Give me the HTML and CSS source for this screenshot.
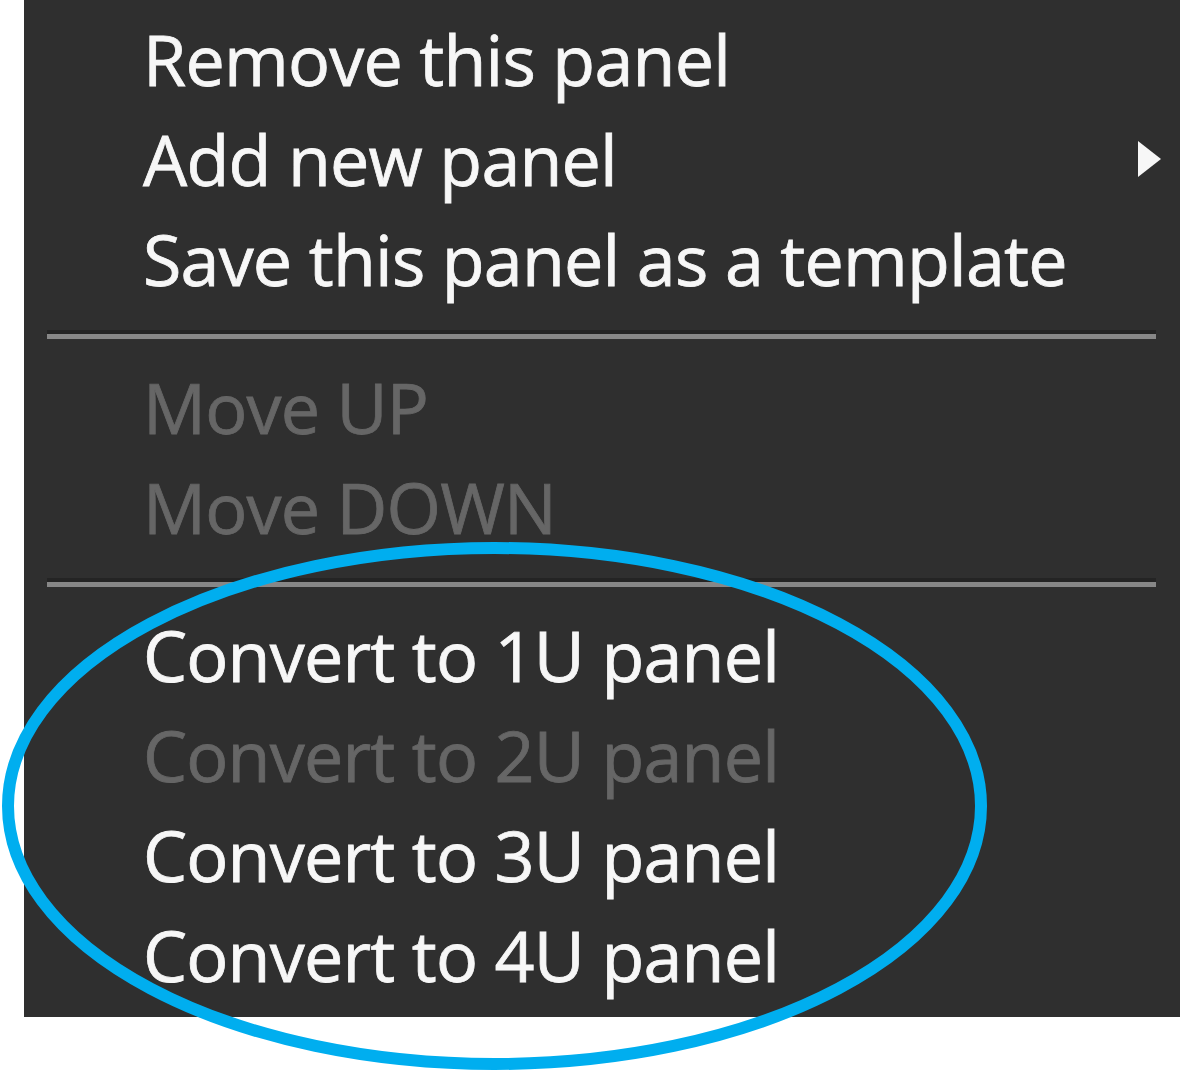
FILE: index.html
```html
<!DOCTYPE html>
<html lang="en">
<head>
  <meta charset="UTF-8" />
  <title>Panel menu</title>
  <link rel="stylesheet" href="styles.css">
</head>
<body>
  <div class="menu">
    <div class="menu-item">Remove this panel</div>
    <div class="menu-item">Add new panel <span class="submenu-arrow"></span></div>
    <div class="menu-item">Save this panel as a template</div>

    <div class="separator"></div>

    <div class="menu-item disabled">Move UP</div>
    <div class="menu-item disabled">Move DOWN</div>

    <div class="separator"></div>

    <div class="menu-item">Convert to 1U panel</div>
    <div class="menu-item disabled">Convert to 2U panel</div>
    <div class="menu-item">Convert to 3U panel</div>
    <div class="menu-item">Convert to 4U panel</div>
  </div>

  <!-- highlight drawn over the convert options -->
  <svg class="highlight" width="1180" height="1071" viewBox="0 0 1180 1071">
    <ellipse cx="494.5" cy="806" rx="486.5" ry="258" fill="none" stroke="#00aeef" stroke-width="12" />
  </svg>
</body>
</html>
```

FILE: styles.css
```css
:root {
  --menu-bg: #2f2f2f;
  --text: #f7f7f7;
  --text-disabled: #666666;
  --sep-dark: #242424;
  --sep-light: #878787;
}

*, *::before, *::after {
  box-sizing: border-box;
}

body {
  margin: 0;
  background: #ffffff;
  font-family: 'Open Sans', 'DejaVu Sans', sans-serif;
  position: relative;
  width: 1180px;
  height: 1071px;
  overflow: hidden;
}

.menu {
  margin-left: 24px;
  width: 1156px;
  height: 1017px;
  background-color: var(--menu-bg);
  padding: 9px 19px 12px 119px;
  display: flex;
  flex-direction: column;
}

.menu-item {
  height: 100px;
  line-height: 100px;
  font-size: 70px;
  letter-spacing: -0.8px;
  color: var(--text);
  -webkit-text-stroke: 0.8px currentColor;
  white-space: nowrap;
  display: flex;
  align-items: center;
}

.menu-item.disabled {
  color: var(--text-disabled);
}

.submenu-arrow {
  margin-left: auto;
  width: 0;
  height: 0;
  border-top: 18px solid transparent;
  border-bottom: 18px solid transparent;
  border-left: 23px solid var(--text);
}

.separator {
  margin: 21px 0 18px -96px;
  height: 9px;
  border-top: 4px solid var(--sep-dark);
  background-color: var(--sep-light);
  width: 1109px;
}

.highlight {
  position: absolute;
  top: 0;
  left: 0;
}
```
